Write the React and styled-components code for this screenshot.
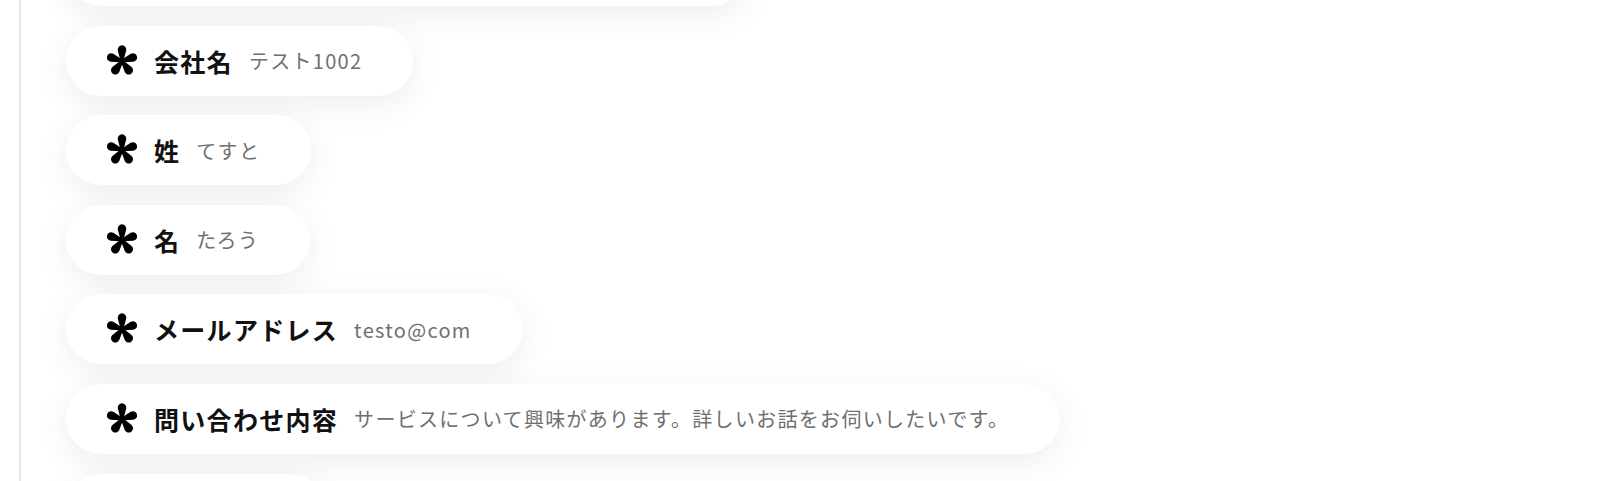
import styled, { createGlobalStyle } from "styled-components";

const GlobalStyle = createGlobalStyle`
  html, body {
    margin: 0;
    padding: 0;
    background: #ffffff;
    overflow: hidden;
  }
  body {
    font-family: "Noto Sans CJK JP", "Noto Sans", sans-serif;
  }
`

const Page = styled.div`
  height: 481px;
  overflow: hidden;
  padding-left: 19px;
`

const Rail = styled.div`
  border-left: 2px solid #e6e6e6;
  min-height: 481px;
  padding-left: 45px;
`

const List = styled.div`
  display: flex;
  flex-direction: column;
  align-items: flex-start;
  gap: 19.6px;
  margin-top: -64px;
`

const Pill = styled.div`
  display: flex;
  align-items: center;
  height: 70px;
  padding: 0 51px 0 41px;
  background: #ffffff;
  border-radius: 35px;
  box-shadow: 0 8px 34px rgba(0, 0, 0, 0.075);
  box-sizing: border-box;
  white-space: nowrap;
`

const Mark = styled.svg`
  width: 30px;
  height: 32px;
  flex-shrink: 0;
  margin-right: 17px;
`

const Label = styled.span`
  font-size: 25px;
  font-weight: 600;
  color: #111111;
  letter-spacing: 1.3px;
  margin-right: 16px;
`

const Value = styled.span`
  font-size: 20px;
  color: #6f6f6f;
  letter-spacing: 1.3px;
`

function Asterisk() {
  const angles = [0, 72, 144, 216, 288];
  return (
    <Mark viewBox="-15 -16 30 32">
      {angles.map((a) => (
        <path
          key={a}
          transform={`rotate(${a})`}
          d="M -1.4 0 L -4.2 -10.5 A 4.3 4.3 0 1 1 4.2 -10.5 L 1.4 0 Z"
          fill="#000"
        />
      ))}
      <circle cx="0" cy="0" r="2.6" fill="#000" />
    </Mark>
  );
}

const rows = [
  { label: "会社名", value: "フォームから新しいお問い合わせが届きました" },
  { label: "会社名", value: "テスト1002" },
  { label: "姓", value: "てすと" },
  { label: "名", value: "たろう" },
  { label: "メールアドレス", value: "testo@com" },
  { label: "問い合わせ内容", value: "サービスについて興味があります。詳しいお話をお伺いしたいです。" },
  { label: "電話番号", value: "" },
];

export default function App() {
  return (
    <Page>
      <GlobalStyle />
      <Rail>
        <List>
          {rows.map((r, i) => (
            <Pill key={i}>
              <Asterisk />
              <Label>{r.label}</Label>
              <Value>{r.value}</Value>
            </Pill>
          ))}
        </List>
      </Rail>
    </Page>
  );
}
